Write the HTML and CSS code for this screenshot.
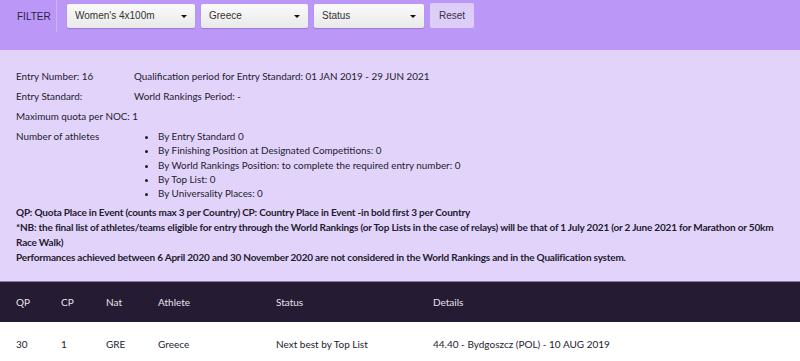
FILE: index.html
```html
<!DOCTYPE html>
<html lang="en">
<head>
  <meta charset="UTF-8" />
  <title>Road to Tokyo | Women's 4x100m</title>
  <link rel="stylesheet" href="styles.css">
</head>
<body>
  <div class="filter-bar">
    <span class="filter-label">FILTER</span>
    <div class="filter-fields">
      <div class="select sel-event">Women's 4x100m<span class="caret"></span></div>
      <div class="select sel-country">Greece<span class="caret"></span></div>
      <div class="select sel-status">Status<span class="caret"></span></div>
      <button class="reset">Reset</button>
    </div>
  </div>

  <div class="info">
    <div class="info-row">
      <span class="info-key">Entry Number: 16</span>
      <span>Qualification period for Entry Standard: 01 JAN 2019 - 29 JUN 2021</span>
    </div>
    <div class="info-row">
      <span class="info-key">Entry Standard:</span>
      <span>World Rankings Period: -</span>
    </div>
    <div class="info-row">
      <span>Maximum quota per NOC: 1</span>
    </div>
    <div class="info-row athletes">
      <span class="info-key">Number of athletes</span>
      <ul>
        <li>By Entry Standard 0</li>
        <li>By Finishing Position at Designated Competitions: 0</li>
        <li>By World Rankings Position: to complete the required entry number: 0</li>
        <li>By Top List: 0</li>
        <li>By Universality Places: 0</li>
      </ul>
    </div>
    <div class="notes">
      <p>QP: Quota Place in Event (counts max 3 per Country) CP: Country Place in Event -in bold first 3 per Country</p>
      <p>*NB: the final list of athletes/teams eligible for entry through the World Rankings (or Top Lists in the case of relays) will be that of 1 July 2021 (or 2 June 2021 for Marathon or 50km Race Walk)</p>
      <p>Performances achieved between 6 April 2020 and 30 November 2020 are not considered in the World Rankings and in the Qualification system.</p>
    </div>
  </div>

  <table class="results">
    <thead>
      <tr>
        <th class="c-qp">QP</th>
        <th class="c-cp">CP</th>
        <th class="c-nat">Nat</th>
        <th class="c-ath">Athlete</th>
        <th class="c-status">Status</th>
        <th>Details</th>
      </tr>
    </thead>
    <tbody>
      <tr>
        <td>30</td>
        <td>1</td>
        <td>GRE</td>
        <td>Greece</td>
        <td>Next best by Top List</td>
        <td>44.40 - Bydgoszcz (POL) - 10 AUG 2019</td>
      </tr>
    </tbody>
  </table>
</body>
</html>
```

FILE: styles.css
```css
body { margin: 0; font-family: Lato, "Noto Sans", sans-serif; font-size: 10px; color: #241c2e; background: #fff; }

.filter-bar { background: #bb98f8; height: 50px; display: flex; align-items: flex-start; }
.filter-label { width: 39px; padding: 11px 0 0 17px; height: 21px; border-right: 1px solid #c9b3f6; font-family: "Liberation Sans", Arial, sans-serif; color: #2b2240; }
.filter-fields { display: flex; gap: 6px; padding: 3px 0 0 10px; }
.select { position: relative; height: 24px; line-height: 24px; margin-top: 1px; padding-left: 8px; box-sizing: border-box; font-family: "Liberation Sans", Arial, sans-serif; color: #333; background: linear-gradient(#fafafa, #e9e9e9); border-radius: 2px; box-shadow: 0 1px 1px rgba(60, 30, 110, 0.25); }
.sel-event { width: 128px; }
.sel-country { width: 107px; }
.sel-status { width: 110px; }
.caret { position: absolute; right: 8px; top: 11px; border-left: 3px solid transparent; border-right: 3px solid transparent; border-top: 3px solid #111; }
.reset { height: 25px; width: 44px; padding: 0; border: none; border-radius: 2px; background: #ddcdf9; color: #3a3048; font-family: "Liberation Sans", Arial, sans-serif; font-size: 10px; }

.info { background: #e1d3fa; padding: 19px 16px 16px 16px; border-bottom: 1px solid #8e7ba8; }
.info-row { display: flex; height: 20px; line-height: 15px; font-size: 9.85px; }
.info-key { width: 118px; flex-shrink: 0; }
.athletes { height: auto; }
.athletes ul { margin: 0; padding: 0 0 0 24px; list-style: disc; }
.athletes li { line-height: 14.3px; }
.notes { padding-top: 5px; font-weight: 700; letter-spacing: -0.2px; }
.notes p { margin: 0; line-height: 15px; }

.results { width: 100%; border-collapse: collapse; }
.results th { background: #251b32; color: #e8e2ef; font-weight: 400; text-align: left; height: 40px; padding: 0 0 0 16px; }
.results td { height: 44px; padding: 0 0 0 16px; text-align: left; }
.c-qp { width: 29px; }
.c-cp { width: 29px; }
.c-nat { width: 36px; }
.c-ath { width: 102px; }
.c-status { width: 141px; }
```
